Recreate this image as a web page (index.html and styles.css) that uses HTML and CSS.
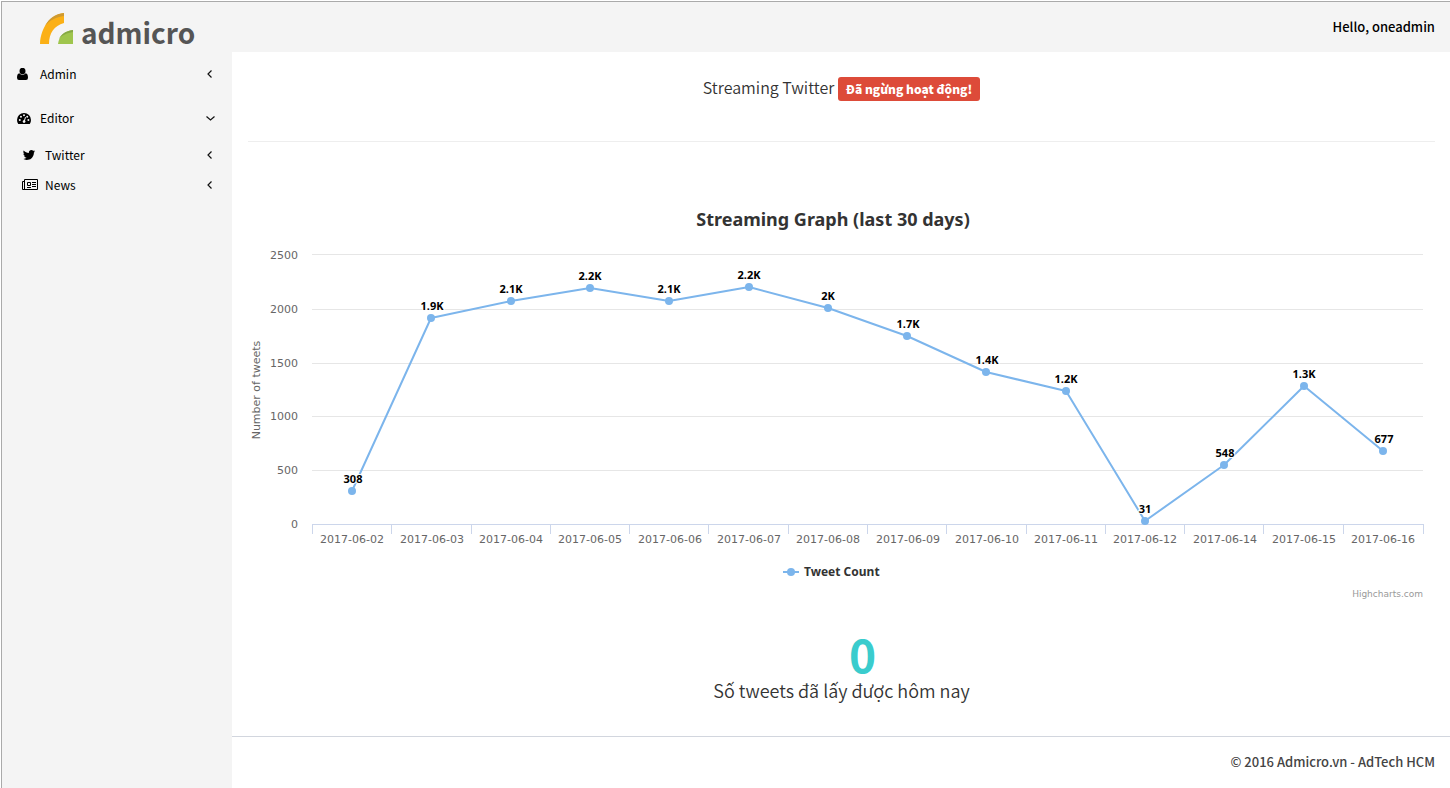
FILE: index.html
```html
<!DOCTYPE html>
<html lang="vi">
<head>
<meta charset="utf-8">
<title>Admicro</title>
<link rel="stylesheet" href="styles.css">
</head>
<body>
<div class="page">
  <header class="topbar">
    <a class="logo" href="#">
      <svg class="logo-mark" width="34" height="32" viewBox="0 0 34 32" aria-hidden="true">
        <path d="M0 31C1 14 10 2 24 0V10C14 13 9 20 9 31Z" fill="#fbb016"/>
        <path d="M5 13C9 5 15 1 24 0V3C16 4 10 7 5 13Z" fill="#cf9a30"/>
        <path d="M18 31C19 23 24 18 33 17V31Z" fill="#9fc54d"/>
        <path d="M19 26C21 21 26 18 33 17V19C27 20 22 22 19 26Z" fill="#86a845"/>
      </svg>
      <span class="logo-text">admicro</span>
    </a>
    <strong class="greeting">Hello, oneadmin</strong>
  </header>
  <div class="body">
    <nav class="sidebar">
      <a class="nav-item" href="#">
        <span class="icon"><svg viewBox="0 0 12 12" width="12" height="12"><ellipse cx="5.500" cy="3" rx="3" ry="3.200"/><path d="M2.300 5.200Q0 5.600 0 9.800Q0 12 2 12H9Q11 12 11 9.800Q11 5.600 8.700 5.200Q5.500 8.400 2.300 5.200Z"/></svg></span>
        <span class="nav-label">Admin</span>
        <svg class="chevron" viewBox="0 0 10 10" width="10" height="10"><path d="M6.500 1.500L3 5L6.500 8.500"/></svg>
      </a>
      <a class="nav-item" href="#">
        <span class="icon"><svg viewBox="0 0 1792 1792" width="14" height="14"><path fill-rule="evenodd" d="M0 1152Q0 790 262 523T896 256T1530 523T1792 1152Q1792 1412 1652 1632Q1634 1664 1598 1664H194Q158 1664 140 1632Q0 1414 0 1152ZM230 1152A128 128 0 1 0 486 1152A128 128 0 1 0 230 1152ZM380 740A128 128 0 1 0 636 740A128 128 0 1 0 380 740ZM768 540A128 128 0 1 0 1024 540A128 128 0 1 0 768 540ZM1180 740A128 128 0 1 0 1436 740A128 128 0 1 0 1180 740ZM1330 1152A128 128 0 1 0 1586 1152A128 128 0 1 0 1330 1152ZM1030 760L910 1160Q740 1180 720 1340Q740 1520 900 1530Q1070 1510 1090 1350Q1090 1260 1020 1200L1150 790Z"/></svg></span>
        <span class="nav-label">Editor</span>
        <svg class="chevron" viewBox="0 0 10 10" width="10" height="10"><path d="M1.500 3.500L5.500 7L9.500 3.500"/></svg>
      </a>
      <div class="subnav">
        <a class="nav-item nav-sub" href="#">
          <span class="icon"><svg viewBox="0 0 1792 1792" width="14" height="14"><path d="M1684 408q-67 98-162 167 1 14 1 42 0 130-38 259.500t-115.500 248.500-184.500 210.500-258 146-323 54.500q-271 0-496-145 35 4 78 4 225 0 401-138-105-2-188-64.500t-114-159.500q33 5 61 5 43 0 85-11-112-23-185.500-111.500t-73.500-205.500v-4q68 38 146 41-66-44-105-115t-39-154q0-88 44-163 121 149 294.500 238.500t371.500 99.500q-8-38-8-74 0-134 94.500-228.500t228.500-94.500q140 0 236 102 109-21 205-78-37 115-142 178 93-10 186-50z"/></svg></span>
          <span class="nav-label">Twitter</span>
          <svg class="chevron" viewBox="0 0 10 10" width="10" height="10"><path d="M6.500 1.500L3 5L6.500 8.500"/></svg>
        </a>
        <a class="nav-item nav-sub" href="#">
          <span class="icon"><svg viewBox="0 0 16 12" width="16" height="12"><path fill="none" stroke="#000" d="M2.500 .5H15.500V10.500H.5V2.500H2.500M2.500 .5V10.500M5.500 3.500H8.500V6.500H5.500ZM10 3.500H14M10 5.500H14M10 7.500H14M5 8.500H9"/></svg></span>
          <span class="nav-label">News</span>
          <svg class="chevron" viewBox="0 0 10 10" width="10" height="10"><path d="M6.500 1.500L3 5L6.500 8.500"/></svg>
        </a>
      </div>
    </nav>
    <div class="content">
      <main class="main">
        <h1 class="status">Streaming Twitter <span class="badge">Đã ngừng hoạt động!</span></h1>
        <hr class="rule">
        <svg class="chart" viewBox="0 0 1187 400" role="img" aria-label="Streaming Graph">
          <text class="chart-title" x="585" y="24">Streaming Graph (last 30 days)</text>
          <path class="grid" d="M64 52.500H1175M64 107.500H1175M64 161.500H1175M64 214.500H1175M64 268.500H1175"/>
          <path class="axis" d="M64 322.500H1176M64.500 322V332M143.500 322V332M223.500 322V332M302.500 322V332M381.500 322V332M460.500 322V332M540.500 322V332M619.500 322V332M698.500 322V332M778.500 322V332M857.500 322V332M936.500 322V332M1015.500 322V332M1095.500 322V332M1175.500 322V332"/>
          <g class="y-labels">
            <text x="50" y="57">2500</text><text x="50" y="111">2000</text><text x="50" y="165">1500</text>
            <text x="50" y="218">1000</text><text x="50" y="272">500</text><text x="50" y="326">0</text>
          </g>
          <text class="axis-title" transform="translate(12 188) rotate(-90)">Number of tweets</text>
          <g class="x-labels">
            <text x="104" y="341">2017-06-02</text><text x="184" y="341">2017-06-03</text><text x="263" y="341">2017-06-04</text><text x="342" y="341">2017-06-05</text><text x="422" y="341">2017-06-06</text><text x="501" y="341">2017-06-07</text><text x="580" y="341">2017-06-08</text><text x="660" y="341">2017-06-09</text><text x="739" y="341">2017-06-10</text><text x="818" y="341">2017-06-11</text><text x="897" y="341">2017-06-12</text><text x="977" y="341">2017-06-14</text><text x="1056" y="341">2017-06-15</text><text x="1135" y="341">2017-06-16</text>
          </g>
          <polyline class="line" points="104,289 183,116 263,99 342,86 421,99 501,85 580,106 659,134 738,170 818,189 897,319 976,263 1056,184 1135,249"/>
          <g class="dots">
            <circle cx="104" cy="289" r="4"/><circle cx="183" cy="116" r="4"/><circle cx="263" cy="99" r="4"/><circle cx="342" cy="86" r="4"/><circle cx="421" cy="99" r="4"/><circle cx="501" cy="85" r="4"/><circle cx="580" cy="106" r="4"/><circle cx="659" cy="134" r="4"/><circle cx="738" cy="170" r="4"/><circle cx="818" cy="189" r="4"/><circle cx="897" cy="319" r="4"/><circle cx="976" cy="263" r="4"/><circle cx="1056" cy="184" r="4"/><circle cx="1135" cy="249" r="4"/>
          </g>
          <g class="values">
            <text x="105" y="281">308</text><text x="184" y="108">1.9K</text><text x="263" y="91">2.1K</text><text x="342" y="78">2.2K</text><text x="421" y="91">2.1K</text><text x="501" y="77">2.2K</text><text x="580" y="98">2K</text><text x="660" y="126">1.7K</text><text x="739" y="162">1.4K</text><text x="818" y="181">1.2K</text><text x="897" y="311">31</text><text x="977" y="255">548</text><text x="1056" y="176">1.3K</text><text x="1136" y="241">677</text>
          </g>
          <path class="line" d="M535 370H551"/>
          <circle class="dots" cx="543" cy="370" r="4"/>
          <text class="legend" x="556" y="374">Tweet Count</text>
          <text class="credits" x="1175" y="395">Highcharts.com</text>
        </svg>
        <section class="total">
          <strong class="total-value">0</strong>
          <p class="total-label">Số tweets đã lấy được hôm nay</p>
        </section>
      </main>
      <footer class="footer">© 2016 Admicro.vn - AdTech HCM</footer>
    </div>
  </div>
</div>
</body>
</html>
```
FILE: styles.css
```css
* { box-sizing: border-box; }

body {
  margin: 0;
  background: #fff;
  color: #000;
  font: 12px/20px "Noto Sans CJK SC", sans-serif;
}

.page {
  display: flex;
  flex-direction: column;
  min-height: calc(100vh - 1px);
  margin: 1px 0 0 1px;
  border: 1px solid #aaa;
  border-width: 1px 0 0 1px;
}

.topbar {
  display: flex;
  justify-content: space-between;
  align-items: center;
  height: 50px;
  padding: 0 15px 0 38px;
  background: #f4f4f4;
}

.logo {
  display: flex;
  align-items: center;
  gap: 7px;
  color: #555;
  text-decoration: none;
}

.logo-mark { margin-top: 3px; }

.logo-text {
  padding-top: 10px;
  font: bold 28px/32px "Noto Sans CJK SC", sans-serif;
}

.greeting {
  font-size: 13px;
  font-weight: 500;
}

.body {
  display: flex;
  flex: 1;
}

.sidebar {
  flex: 0 0 230px;
  background: #f4f4f4;
}

.nav-item {
  display: flex;
  align-items: center;
  height: 44px;
  padding: 0 17px 0 15px;
  color: #000;
  text-decoration: none;
}

.nav-sub {
  height: 30px;
  padding-left: 20px;
}

.icon {
  display: flex;
  flex: 0 0 16px;
}

.nav-label {
  flex: 1;
  margin-left: 7px;
}

.chevron {
  fill: none;
  stroke: #111;
  stroke-width: 1.2;
}

.content {
  display: flex;
  flex: 1;
  flex-direction: column;
}

.main {
  flex: 1;
  padding: 20px 15px 0 16px;
}

.status {
  margin: 0;
  color: #333;
  font-size: 16px;
  font-weight: 350;
  line-height: 30px;
  text-align: center;
}

.badge {
  display: inline-block;
  padding: 0 8px;
  border-radius: 3px;
  background: #dd4b39;
  color: #fff;
  font-size: 12px;
  font-weight: 900;
  line-height: 24px;
}

.rule {
  margin: 39px 0 60px;
  border: 0;
  border-top: 1px solid #eee;
}

.chart {
  display: block;
  width: 100%;
  font-family: "DejaVu Sans", sans-serif;
  font-size: 11px;
}

.chart-title {
  fill: #333;
  font: bold 18px "Noto Sans", sans-serif;
  text-anchor: middle;
}

.grid { stroke: #e6e6e6; }
.axis { stroke: #ccd6eb; }
.y-labels { fill: #666; text-anchor: end; }
.x-labels { fill: #666; text-anchor: middle; }
.axis-title { fill: #666; text-anchor: middle; }
.line { fill: none; stroke: #7cb5ec; stroke-width: 2; stroke-linejoin: round; }
.dots { fill: #7cb5ec; }

.values {
  font: bold 11px "Noto Sans", sans-serif;
  stroke: #fff;
  stroke-width: 2;
  paint-order: stroke;
  text-anchor: middle;
}

.legend {
  fill: #333;
  font: bold 12px "Noto Sans", sans-serif;
}

.credits {
  fill: #999;
  font: 9px "DejaVu Sans", sans-serif;
  text-anchor: end;
}

.total {
  padding: 26px 0 0;
  text-align: center;
}

.total-value {
  display: block;
  margin-left: 42px;
  color: #3acccd;
  font-size: 46px;
  line-height: 50px;
}

.total-label {
  margin: 0;
  color: #333;
  font-size: 18px;
  font-weight: 350;
  line-height: 24px;
}

.footer {
  padding: 15px 15px 16px;
  border-top: 1px solid #d2d6de;
  color: #444;
  font-size: 13px;
  font-weight: 500;
  text-align: right;
}
```
